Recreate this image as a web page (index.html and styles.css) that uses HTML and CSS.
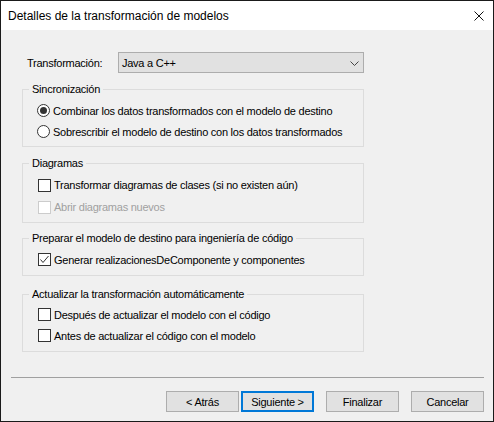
FILE: index.html
```html
<!DOCTYPE html>
<html lang="es">
<head>
<meta charset="utf-8">
<title>Detalles de la transformación de modelos</title>
<link rel="stylesheet" href="styles.css">
</head>
<body>
<div class="window">
  <div class="titlebar">
    <span class="title">Detalles de la transformación de modelos</span>
    <svg class="close" width="10" height="10" viewBox="0 0 10 10"><path d="M0.5 0.5 L9.5 9.5 M9.5 0.5 L0.5 9.5" stroke="#111" stroke-width="1" fill="none"/></svg>
  </div>
  <div class="content">
    <div class="form-row">
      <span class="label">Transformación:</span>
      <div class="combo">
        <span>Java a C++</span>
        <svg class="chev" width="9" height="5" viewBox="0 0 9 5"><path d="M0.5 0.5 L4.5 4.5 L8.5 0.5" stroke="#444" stroke-width="1" fill="none"/></svg>
      </div>
    </div>

    <fieldset class="group g1">
      <legend>Sincronización</legend>
      <div class="row"><span class="radio on"></span><span>Combinar los datos transformados con el modelo de destino</span></div>
      <div class="row"><span class="radio"></span><span>Sobrescribir el modelo de destino con los datos transformados</span></div>
    </fieldset>

    <fieldset class="group g2">
      <legend>Diagramas</legend>
      <div class="row tall"><span class="check"></span><span>Transformar diagramas de clases (si no existen aún)</span></div>
      <div class="row tall disabled"><span class="check"></span><span>Abrir diagramas nuevos</span></div>
    </fieldset>

    <fieldset class="group g3">
      <legend>Preparar el modelo de destino para ingeniería de código</legend>
      <div class="row"><span class="check"><svg width="11" height="11" viewBox="0 0 11 11"><path d="M1.5 5.5 L4 8.5 L9.5 2" stroke="#333" stroke-width="1" fill="none"/></svg></span><span>Generar realizacionesDeComponente y componentes</span></div>
    </fieldset>

    <fieldset class="group g4">
      <legend>Actualizar la transformación automáticamente</legend>
      <div class="row"><span class="check"></span><span>Después de actualizar el modelo con el código</span></div>
      <div class="row"><span class="check"></span><span>Antes de actualizar el código con el modelo</span></div>
    </fieldset>
  </div>
  <div class="footer">
    <div class="separator"></div>
    <div class="buttons">
      <button class="btn">&lt; Atrás</button>
      <button class="btn default">Siguiente &gt;</button>
      <button class="btn">Finalizar</button>
      <button class="btn">Cancelar</button>
    </div>
  </div>
</div>
</body>
</html>
```
FILE: styles.css
```css
* { box-sizing: border-box; }
html, body { margin: 0; padding: 0; background: #f0f0f0; }
body {
  font-family: "Liberation Sans", Arial, sans-serif;
  font-size: 11px;
  letter-spacing: -0.25px;
  color: #000;
}
.window {
  width: 494px;
  height: 422px;
  border: 1px solid #1a1a1a;
  background: #f0f0f0;
  display: flex;
  flex-direction: column;
}
.titlebar {
  height: 29px;
  background: #fff;
  display: flex;
  align-items: center;
  justify-content: space-between;
  padding: 0 9px 0 7px;
}
.title {
  font-size: 12px;
  letter-spacing: 0;
  color: #000;
}
.close { display: block; }

.content {
  padding: 22px 0 0 21px;
  display: flex;
  flex-direction: column;
}
.form-row {
  display: grid;
  grid-template-columns: 96px 246px;
  align-items: center;
  height: 21px;
}
.label { padding-left: 5px; }
.combo {
  height: 21px;
  background: #e1e1e1;
  border: 1px solid #adadad;
  display: flex;
  align-items: center;
  justify-content: space-between;
  padding: 0 4px 0 3px;
}
.chev { display: block; margin-top: 1px; }

.group {
  width: 342px;
  margin: 0;
  border: 1px solid #dcdcdc;
  padding: 4px 0 4px 0;
  min-inline-size: 0;
}
.group legend {
  margin-left: 6px;
  padding: 0 3px;
  line-height: 14px;
}
.g1 { margin-top: 9px; }
.g2 { margin-top: 9px; padding-bottom: 4px; }
.g3 { margin-top: 8px; padding-bottom: 5px; }
.g4 { margin-top: 11px; padding-top: 3px; padding-bottom: 5px; }

.row {
  height: 21px;
  display: flex;
  align-items: center;
  gap: 3px;
  padding-left: 14px;
  line-height: 14px;
  white-space: nowrap;
}
.row.tall { height: 22px; }
.row.disabled { color: #a0a0a0; }

.radio {
  width: 13px;
  height: 13px;
  border: 1px solid #333;
  border-radius: 50%;
  background: #fff;
  display: flex;
  align-items: center;
  justify-content: center;
  flex: none;
}
.radio.on::after {
  content: "";
  width: 7px;
  height: 7px;
  border-radius: 50%;
  background: #333;
}
.check {
  width: 13px;
  height: 13px;
  border: 1px solid #333;
  background: #fff;
  flex: none;
  display: flex;
  align-items: center;
  justify-content: center;
  margin-left: 1px;
}
.check svg { display: block; }
.disabled .check { border-color: #cccccc; background: #fff; }

.footer {
  padding: 0 9px 0 10px;
  margin-top: 25px;
}
.separator {
  height: 1px;
  background: #a0a0a0;
}
.buttons {
  margin-top: 13px;
  display: flex;
  justify-content: flex-end;
}
.btn {
  width: 73px;
  height: 21px;
  border: 1px solid #adadad;
  background: #e1e1e1;
  font-family: inherit;
  font-size: 11px;
  letter-spacing: -0.25px;
  color: #000;
  padding: 0;
  margin-left: 12px;
}
.btn.default {
  border: 2px solid #0078d7;
  margin-left: 2px;
}
```
